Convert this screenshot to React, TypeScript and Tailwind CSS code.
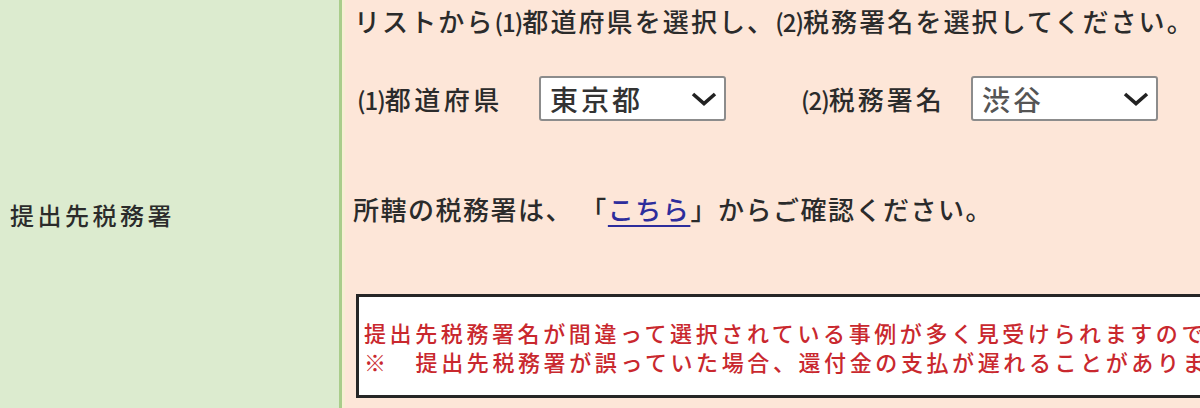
const jp = "font-['Noto_Sans_CJK_JP','Noto_Sans',sans-serif]";

type PickerProps = {
  value: string;
  options: string[];
  className?: string;
  textClass?: string;
};

const Chevron = () => (
  <svg
    viewBox="0 0 26 14"
    className="absolute right-[9px] top-1/2 -translate-y-1/2 w-[26px] h-[14px] pointer-events-none"
  >
    <polyline points="2,2 13,11.5 24,2" fill="none" stroke="#222" strokeWidth="3.6" strokeLinejoin="miter" />
  </svg>
);

const Picker = ({ value, options, className = '', textClass = '' }: PickerProps) => (
  <div className={`relative h-[45px] ${className}`}>
    <select
      defaultValue={value}
      className={`appearance-none w-full h-full bg-white border-2 border-[#8c8c8c] rounded-[3px] pl-[9px] text-[28px] leading-none tracking-[3px] outline-none ${textClass}`}
    >
      {options.map((o) => (
        <option key={o}>{o}</option>
      ))}
    </select>
    <Chevron />
  </div>
);

// ascii "(1)" kept narrow like the original form's glyph
const Num = ({ n }: { n: string }) => (
  <span className="tracking-[-1px] text-[24px]">({n})</span>
);

export default function App() {
  return (
    <div className={`w-[1200px] h-[408px] overflow-hidden flex bg-[#fde6d8] text-[#2b2b2b] font-medium ${jp}`}>
      {/* label cell */}
      <div className="w-[342px] shrink-0 bg-[#dcebcf] border-r-[3px] border-[#a9cd8b] flex items-center pl-[10px] pt-[22px]">
        <span className="text-[24px] tracking-[3.5px]">提出先税務署</span>
      </div>

      {/* input cell */}
      <div className="flex-1 min-w-0 border-l-[3px] border-[#f6efd3] pl-[9px] flex flex-col">
        <p className="leading-[42px] text-[26px] tracking-[2.1px] whitespace-nowrap">
          リストから<Num n="1" />都道府県を選択し、<Num n="2" />税務署名を選択してください。
        </p>

        <div className="mt-[33px] flex items-center h-[45px] whitespace-nowrap">
          <span className="w-[185px] pl-[3px] text-[26px] tracking-[3.5px]">
            <Num n="1" />都道府県
          </span>
          <Picker
            value="東京都"
            options={['東京都', '神奈川県', '埼玉県', '千葉県']}
            className="w-[187px]"
            textClass="text-[#333]"
          />
          <span className="ml-[75px] w-[170px] text-[26px] tracking-[3px]">
            <Num n="2" />税務署名
          </span>
          <Picker
            value="渋谷"
            options={['渋谷', '新宿', '品川', '目黒']}
            className="w-[187px]"
            textClass="text-[#555]"
          />
        </div>

        <p className="mt-[68px] -ml-[1px] leading-[40px] text-[26px] tracking-[1.5px] whitespace-nowrap">
          所轄の税務署は、 「
          <a href="#" className="text-[#2d2d9c] underline underline-offset-[5px]">
            こちら
          </a>
          」からご確認ください。
        </p>

        <div className="mt-[65px] ml-[2px] w-[900px] h-[104px] shrink-0 bg-white border-[3px] border-[#262626] pl-[5px] pt-[21px] text-[#c9282e] text-[22px] leading-[29px] tracking-[3.6px] whitespace-nowrap">
          <p>提出先税務署名が間違って選択されている事例が多く見受けられますので、ご注意ください。</p>
          <p>
            ※<span className="inline-block w-[26px]" />提出先税務署が誤っていた場合、還付金の支払が遅れることがあります。
          </p>
        </div>
      </div>
    </div>
  );
}
